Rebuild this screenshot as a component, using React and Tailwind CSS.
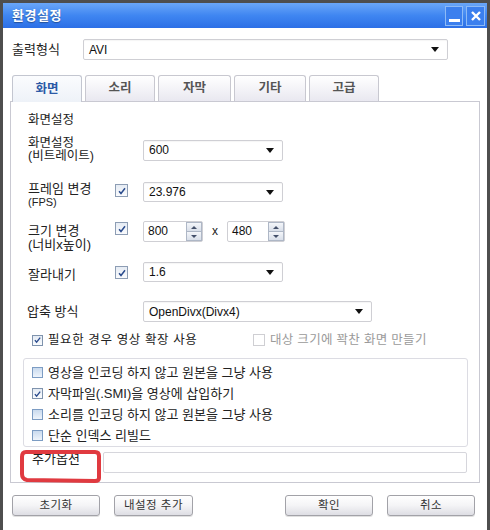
import React from "react";

const Arrow = () => (
  <svg width="8" height="5" viewBox="0 0 8 5" className="shrink-0">
    <path d="M0 0h8L4 5z" fill="#111" />
  </svg>
);

function Select({ value, className = "" }) {
  return (
    <div
      className={`h-[21px] flex items-center justify-between pl-[5px] pr-[8px] bg-white border border-[#cfcfd4] rounded-[2px] shadow-[inset_0_1px_1px_rgba(0,0,0,0.04)] text-[12px] text-[#111] ${className}`}
    >
      <span>{value}</span>
      <Arrow />
    </div>
  );
}

function Check({ checked, kind = "form", label, className = "", textClass = "" }) {
  const box =
    kind === "group"
      ? "w-[11px] h-[11px] border-[#7c9cc3] bg-linear-to-b from-[#c9daee] to-[#eef4fb]"
      : kind === "off"
      ? "w-[12px] h-[12px] border-[#cfcfd3] bg-white"
      : kind === "small"
      ? "w-[11px] h-[11px] border-[#7f93ad] bg-linear-to-b from-[#e4ebf4] to-[#fafcfe]"
      : "w-[13px] h-[13px] border-[#8d9db4] bg-linear-to-b from-[#e6ecf4] to-[#fafbfd]";
  return (
    <div className={`flex items-center gap-[5px] ${className}`}>
      <div className={`shrink-0 border flex items-center justify-center ${box}`}>
        {checked && (
          <svg viewBox="0 0 12 12" className="w-[10px] h-[10px]">
            <path d="M2.5 6.2l2.3 2.8L9.6 2.8" stroke="#2a4b8d" strokeWidth="1.8" fill="none" />
          </svg>
        )}
      </div>
      {label && <span className={textClass}>{label}</span>}
    </div>
  );
}

function Spin({ value, className = "" }) {
  return (
    <div className={`h-[21px] flex bg-white border border-[#cfcfd4] rounded-[2px] ${className}`}>
      <div className="flex-1 pl-[4px] text-[12px] leading-[19px] text-[#111]">{value}</div>
      <div className="w-[16px] flex flex-col">
        <div className="flex-1 flex items-center justify-center border border-[#aeb7c6] bg-linear-to-b from-[#f4f6fa] to-[#d9dfe9]">
          <svg width="6" height="3" viewBox="0 0 6 3"><path d="M0 3h6L3 0z" fill="#44506a" /></svg>
        </div>
        <div className="flex-1 flex items-center justify-center border border-t-0 border-[#aeb7c6] bg-linear-to-b from-[#f4f6fa] to-[#d9dfe9]">
          <svg width="6" height="3" viewBox="0 0 6 3"><path d="M0 0h6L3 3z" fill="#44506a" /></svg>
        </div>
      </div>
    </div>
  );
}

function Tab({ label, active, className = "" }) {
  return active ? (
    <div
      className={`relative z-10 -mb-px h-[27px] flex items-center justify-center border border-b-0 border-[#c3c6d0] rounded-t-[3px] bg-linear-to-b from-[#fbfcfe] to-[#eef2f8] text-[#2c5aa6] font-bold text-[12.5px] ${className}`}
    >
      {label}
    </div>
  ) : (
    <div
      className={`h-[26px] flex items-center justify-center border border-b-0 border-[#c8c8d0] rounded-t-[3px] bg-linear-to-b from-white to-[#e9e8f0] text-[#555] font-semibold text-[12.5px] ${className}`}
    >
      {label}
    </div>
  );
}

function Btn({ label, className = "" }) {
  return (
    <div
      className={`h-[21px] flex items-center justify-center border border-[#a2a2a8] rounded-[3px] bg-linear-to-b from-white via-[#f4f4f6] to-[#dedee4] shadow-[0_1px_0_rgba(0,0,0,0.12)] text-[11.5px] tracking-[0.5px] text-[#333] ${className}`}
    >
      {label}
    </div>
  );
}

export default function App() {
  return (
    <div className="w-[490px] h-[530px] bg-[#4e4e4e] pt-[3px] px-[3px] flex flex-col font-['Liberation_Sans','Noto_Sans_CJK_KR',sans-serif] text-[#222]">
      {/* title bar */}
      <div className="h-[25px] shrink-0 flex items-center justify-between pl-[9px] pr-[2px] bg-linear-to-b from-[#6aa6f8] via-[#3f86f1] to-[#2c6fe6]">
        <span className="text-white font-bold text-[13px] tracking-[0.5px] [text-shadow:0_1px_1px_rgba(0,0,0,0.35)]">
          환경설정
        </span>
        <div className="flex gap-[3px]">
          <div className="w-[18px] h-[20px] border border-[#8dbaf6] bg-[#3b7fee] flex items-end justify-center pb-[3px]">
            <div className="w-[11px] h-[3px] bg-white" />
          </div>
          <div className="w-[19px] h-[20px] border border-[#8dbaf6] bg-[#3b7fee] flex items-center justify-center">
            <svg width="12" height="12" viewBox="0 0 12 12">
              <path d="M2 2l8 8M10 2l-8 8" stroke="white" strokeWidth="2.4" />
            </svg>
          </div>
        </div>
      </div>

      {/* body */}
      <div className="flex-1 bg-white flex flex-col">
        <div className="mt-[11px] ml-[9px] h-[21px] flex items-center">
          <span className="w-[71px] text-[13px]">출력형식</span>
          <Select value="AVI" className="w-[365px]" />
        </div>

        {/* tabs */}
        <div className="mt-[15px] ml-[9px] h-[26px] flex items-end gap-[3px]">
          <Tab label="화면" active className="w-[70px]" />
          <Tab label="소리" className="w-[70px]" />
          <Tab label="자막" className="w-[73px]" />
          <Tab label="기타" className="w-[72px]" />
          <Tab label="고급" className="w-[70px]" />
        </div>

        {/* panel */}
        <div className="relative ml-[7px] w-[470px] h-[382px] border border-[#c9c9d2] flex flex-col pt-[10px]">
          <div className="ml-[17px] text-[12.5px] leading-[16px]">화면설정</div>

          <div className="ml-[17px] mt-[9px] h-[26px] flex items-center">
            <div className="w-[115px] text-[12.5px] leading-[13px]">
              <div>화면설정</div>
              <div>(비트레이트)</div>
            </div>
            <Select value="600" className="w-[140px]" />
          </div>

          <div className="ml-[17px] mt-[19px] flex items-start">
            <div className="w-[87px]">
              <div className="text-[13px] leading-[14px]">프레임 변경</div>
              <div className="text-[11px] leading-[12px]">(FPS)</div>
            </div>
            <Check checked className="mt-[2px]" />
            <Select value="23.976" className="ml-[15px] w-[140px] !h-[20px]" />
          </div>

          <div className="ml-[17px] mt-[13px] flex items-start">
            <div className="w-[87px] mt-[3px]">
              <div className="text-[13px] leading-[14px]">크기 변경</div>
              <div className="text-[13px] leading-[13px]">(너비x높이)</div>
            </div>
            <Check checked className="mt-[1px]" />
            <Spin value="800" className="ml-[15px] w-[60px]" />
            <div className="w-[24px] text-center text-[12px] leading-[21px]">x</div>
            <Spin value="480" className="w-[58px]" />
          </div>

          <div className="ml-[17px] mt-[11px] flex items-start">
            <div className="w-[87px] mt-[6px] text-[13px] leading-[14px]">잘라내기</div>
            <Check checked className="mt-[4px]" />
            <Select value="1.6" className="ml-[15px] w-[140px] !h-[20px]" />
          </div>

          <div className="ml-[16px] mt-[19px] h-[21px] flex items-center">
            <div className="w-[116px] text-[13px]">압축 방식</div>
            <Select value="OpenDivx(Divx4)" className="w-[229px]" />
          </div>

          <div className="ml-[21px] mt-[11px] h-[14px] flex items-center">
            <Check
              checked
              kind="small"
              label="필요한 경우 영상 확장 사용"
              className="w-[221px]"
              textClass="text-[12.5px] tracking-[0.6px]"
            />
            <Check
              kind="off"
              label="대상 크기에 꽉찬 화면 만들기"
              className="gap-[4px]"
              textClass="text-[12.5px] tracking-[0.3px] text-[#9a9a9a]"
            />
          </div>

          {/* group */}
          <div className="ml-[12px] mt-[11px] w-[445px] h-[89px] border border-[#dcdce3] rounded-[3px] pt-[3px] pl-[8px] flex flex-col">
            {[
              ["영상을 인코딩 하지 않고 원본을 그냥 사용", false],
              ["자막파일(.SMI)을 영상에 삽입하기", true],
              ["소리를 인코딩 하지 않고 원본을 그냥 사용", false],
              ["단순 인덱스 리빌드", false],
            ].map(([t, c]) => (
              <Check
                key={t}
                checked={c}
                kind={c ? "small" : "group"}
                label={t}
                className="h-[21px]"
                textClass="text-[13px]"
              />
            ))}
          </div>

          <div className="ml-[21px] mt-[5px] flex items-start">
            <div className="w-[71px] text-[13px] leading-[14px]">추가옵션</div>
            <div className="w-[364px] h-[21px] bg-white border border-[#d6d6dc] rounded-[2px]" />
          </div>

          {/* red marker annotation */}
          <svg
            className="absolute left-[8px] top-[346px] pointer-events-none"
            width="84"
            height="36"
            viewBox="0 0 84 36"
          >
            <path
              d="M7 4 L76 4 Q80 4 80 8 L80 30 Q80 33 76 33 L8 32 Q3 31 3 26 L3 9 Q3 4 7 4 Z"
              fill="none"
              stroke="#e03a40"
              strokeWidth="4"
              strokeLinejoin="round"
            />
          </svg>
        </div>

        {/* bottom buttons */}
        <div className="mt-[12px] ml-[9px] flex">
          <Btn label="초기화" className="w-[88px]" />
          <Btn label="내설정 추가" className="ml-[14px] w-[79px]" />
          <Btn label="확인" className="ml-[92px] w-[88px]" />
          <Btn label="취소" className="ml-[14px] w-[88px]" />
        </div>
      </div>
    </div>
  );
}
